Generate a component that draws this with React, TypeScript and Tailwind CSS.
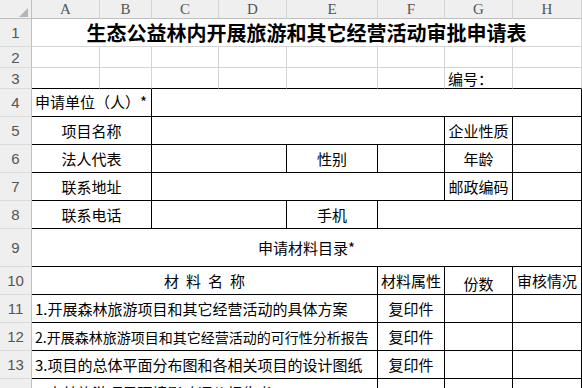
import clsx from 'clsx'
import type { ReactNode } from 'react'

function RowHead({ n }: { n: number }) {
  return (
    <div className="flex items-center justify-center border-r border-b border-r-[#bfbfbf] border-b-[#d9d9d9] bg-[#efefef] font-['Liberation_Sans',sans-serif] text-[15px] leading-none text-[#555]">
      {n}
    </div>
  )
}

function ColHead({ l }: { l: string }) {
  return (
    <div className="flex items-center justify-center border-r border-b border-r-[#d4d4d4] border-b-[#bfbfbf] bg-[#efefef] font-['Liberation_Serif',serif] text-[15px] leading-none text-[#555]">
      {l}
    </div>
  )
}

function Cell({
  span,
  b,
  r,
  align = 'center',
  className,
  children,
}: {
  span?: string
  b?: boolean
  r?: boolean
  align?: 'center' | 'left'
  className?: string
  children?: ReactNode
}) {
  return (
    <div
      className={clsx(
        'flex items-center overflow-hidden whitespace-nowrap border-r border-b leading-none',
        b ? 'border-b-black' : 'border-b-[#d4d4d4]',
        r ? 'border-r-black' : 'border-r-[#d4d4d4]',
        align === 'center' ? 'justify-center' : 'justify-start pl-[3px]',
        span,
        className
      )}
    >
      {children}
    </div>
  )
}

const materials = [
  { t: '1.开展森林旅游项目和其它经营活动的具体方案', size: '' },
  { t: '2.开展森林旅游项目和其它经营活动的可行性分析报告', size: 'text-[14px]' },
  { t: '3.项目的总体平面分布图和各相关项目的设计图纸', size: '' },
]

export default function App() {
  return (
    <div className="h-[388px] w-[582px] overflow-hidden bg-white font-['Noto_Sans_CJK_SC',sans-serif] text-[15px] text-black">
      <div className="grid grid-cols-[32px_68px_52px_67px_68px_91px_67px_68px_69px] grid-rows-[19px_28px_21px_21px_28px_28px_28px_28px_28px_38px_28px_28px_28px_28px_28px]">
        {/* column headers */}
        <div className="relative border-r border-b border-r-[#bfbfbf] border-b-[#bfbfbf] bg-[#efefef]">
          <svg className="absolute left-[19px] top-[8px]" width="9" height="9" viewBox="0 0 9 9">
            <polygon points="9,0 9,9 0,9" fill="#b4b4b4" />
          </svg>
        </div>
        {['A', 'B', 'C', 'D', 'E', 'F', 'G', 'H'].map((l) => (
          <ColHead key={l} l={l} />
        ))}

        {/* 1 */}
        <RowHead n={1} />
        <Cell span="col-span-8" className="text-[20px] font-bold">
          生态公益林内开展旅游和其它经营活动审批申请表
        </Cell>

        {/* 2 */}
        <RowHead n={2} />
        <Cell />
        <Cell />
        <Cell />
        <Cell />
        <Cell />
        <Cell />
        <Cell />
        <Cell />

        {/* 3 */}
        <RowHead n={3} />
        <Cell b />
        <Cell b />
        <Cell b />
        <Cell b />
        <Cell b />
        <Cell b />
        <Cell b align="left" className="pl-[2px]">
          编号：
        </Cell>
        <Cell b />

        {/* 4 */}
        <RowHead n={4} />
        <Cell span="col-span-2" b r align="left" className="pb-[2px]">
          申请单位（人）*
        </Cell>
        <Cell span="col-span-6" b r />

        {/* 5 */}
        <RowHead n={5} />
        <Cell span="col-span-2" b r>
          项目名称
        </Cell>
        <Cell span="col-span-4" b r />
        <Cell b r>
          企业性质
        </Cell>
        <Cell b r />

        {/* 6 */}
        <RowHead n={6} />
        <Cell span="col-span-2" b r>
          法人代表
        </Cell>
        <Cell span="col-span-2" b r />
        <Cell b r>
          性别
        </Cell>
        <Cell b r />
        <Cell b r>
          年龄
        </Cell>
        <Cell b r />

        {/* 7 */}
        <RowHead n={7} />
        <Cell span="col-span-2" b r>
          联系地址
        </Cell>
        <Cell span="col-span-4" b r />
        <Cell b r>
          邮政编码
        </Cell>
        <Cell b r />

        {/* 8 */}
        <RowHead n={8} />
        <Cell span="col-span-2" b r>
          联系电话
        </Cell>
        <Cell span="col-span-2" b r />
        <Cell b r>
          手机
        </Cell>
        <Cell span="col-span-3" b r />

        {/* 9 */}
        <RowHead n={9} />
        <Cell span="col-span-8" b r>
          申请材料目录*
        </Cell>

        {/* 10 */}
        <RowHead n={10} />
        <Cell span="col-span-5" b r className="gap-[7px]">
          <span>材</span>
          <span>料</span>
          <span>名</span>
          <span>称</span>
        </Cell>
        <Cell b r>
          材料属性
        </Cell>
        <Cell b r className="pt-[5px]">
          份数
        </Cell>
        <Cell b r>
          审核情况
        </Cell>

        {/* 11 - 13 */}
        {materials.map((m, i) => (
          <div key={m.t} className="contents">
            <RowHead n={11 + i} />
            <Cell span="col-span-5" b r align="left" className={m.size}>
              {m.t}
            </Cell>
            <Cell b r>
              复印件
            </Cell>
            <Cell b r />
            <Cell b r />
          </div>
        ))}

        {/* 14 */}
        <RowHead n={14} />
        <Cell span="col-span-5" b r align="left" className="items-start pt-[6px]">
          4.森林旅游项目环境影响评价报告书
        </Cell>
        <Cell b r />
        <Cell b r />
        <Cell b r />
      </div>
    </div>
  )
}
